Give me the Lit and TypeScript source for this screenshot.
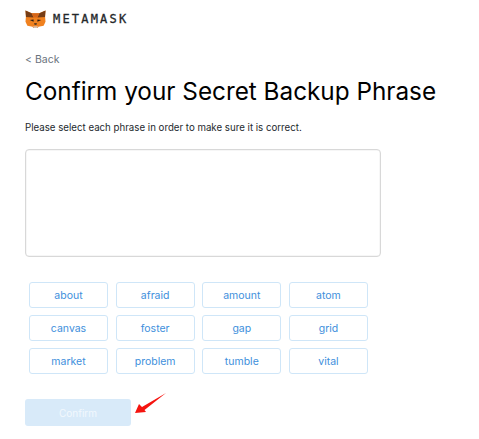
import { LitElement, html, css, svg } from "lit";
import { customElement } from "lit/decorators.js";

const WORDS = ["about","afraid","amount","atom","canvas","foster","gap","grid","market","problem","tumble","vital"];

@customElement("app-root")
export class AppRoot extends LitElement {
  static styles = css`
    :host { display: block; position: relative; width: 479px; height: 439px; overflow: hidden; background: #fff; font-family: Inter, "Liberation Sans", sans-serif; }
    .page { display: flex; flex-direction: column; padding: 9px 0 0 25px; }
    .logo { display: flex; align-items: center; gap: 7px; height: 20px; }
    .logo svg { display: block; }
    .word { font-family: "DejaVu Sans Mono", monospace; font-size: 12px; font-weight: 400; letter-spacing: 2.2px; color: #24272a; -webkit-text-stroke: .3px #24272a; }
    .back { margin-top: 24px; font-size: 10.5px; line-height: 14px; color: #6a737d; display: flex; align-items: center; gap: 3px; }
    h1 { margin: 6px 0 0; font-size: 24.3px; line-height: 36px; font-weight: 400; color: #000; white-space: nowrap; }
    .hint { margin: 12px 0 0; font-size: 9.7px; line-height: 14px; color: #24292e; white-space: nowrap; }
    .box { margin-top: 14px; box-sizing: border-box; width: 356px; height: 108px; border: 1px solid #d8d8d8; border-radius: 4px; box-shadow: inset 0 0 0 .5px #eee; }
    .chips { margin: 25px 0 0 4px; display: grid; grid-template-columns: repeat(4, 79px); grid-auto-rows: 26px; column-gap: 7.67px; row-gap: 7px; }
    .chip { box-sizing: border-box; border: 1px solid #cfe6f8; border-radius: 3px; display: flex; align-items: center; justify-content: center; color: #3e8fdc; font-size: 10.5px; }
    .confirm { margin-top: 25px; width: 106px; height: 27px; border-radius: 3px; background: #d8eaf9; color: #f2f8fd; display: flex; align-items: center; justify-content: center; font-size: 10px; }
    .arrow { position: absolute; left: 130px; top: 390px; }
  `;
  render() {
    return html`<div class="page">
      <div class="logo">
        <svg width="21" height="20" viewBox="0 0 22 20">
          ${svg`<path d="M.5 1 L7 4 H15 L21.5 1 L21 7 L21.5 13 L19.5 17 L14 18 L13.5 19.5 H8.5 L8 18 L2.5 17 L.5 13 L1 7Z" fill="#f0811f"/>
          <path d="M.5 1 L7 4 L9 8.5 L1 8ZM21.5 1 L15 4 L13 8.5 L21 8Z" fill="#763d16"/>
          <path d="M7 4H15L13 8.5H9Z" fill="#d5661a"/>
          <path d="M5 11L9 10.5L9 13ZM17 11L13 10.5L13 13Z" fill="#2b1d13"/>
          <path d="M9.5 14.5H12.5L12 16H10Z" fill="#3a2a1e"/>
          <path d="M8.5 17.5H13.5L13 19.5H9Z" fill="#d7c1b3"/>`}
        </svg>
        <span class="word">METAMASK</span>
      </div>
      <div class="back"><span>&lt;</span><span>Back</span></div>
      <h1>Confirm your Secret Backup Phrase</h1>
      <p class="hint">Please select each phrase in order to make sure it is correct.</p>
      <div class="box"></div>
      <div class="chips">${WORDS.map((w) => html`<div class="chip">${w}</div>`)}</div>
      <div class="confirm">Confirm</div>
    </div>
    <svg class="arrow" width="40" height="28" viewBox="0 0 40 28">
      ${svg`<path d="M5 23 L9 14 L12 17 L36 3 L14.5 20 L16 22Z" fill="#f5140f"/>`}
    </svg>`;
  }
}
